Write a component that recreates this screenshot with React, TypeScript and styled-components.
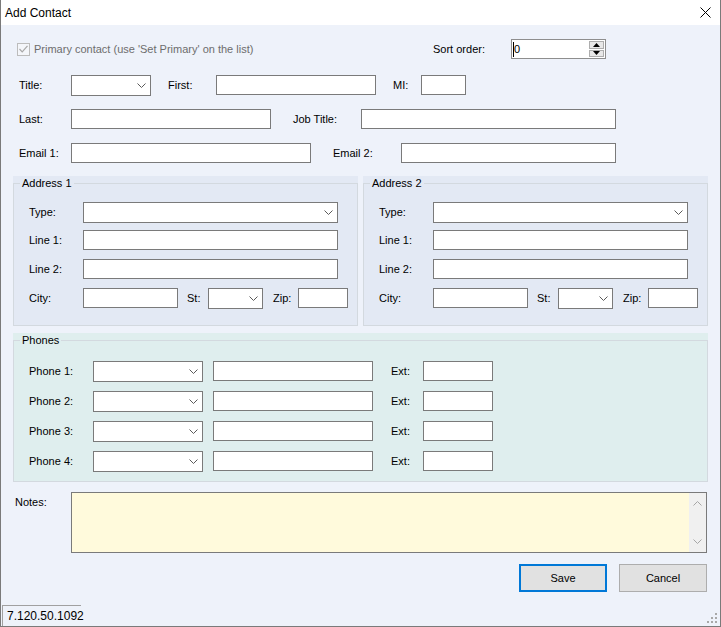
import React from 'react';
import styled, { createGlobalStyle } from 'styled-components';

const Global = createGlobalStyle`
  * { box-sizing: border-box; }
  html, body { margin: 0; padding: 0; background: #ffffff; }
  body {
    font-family: "Liberation Sans", Arial, sans-serif;
    font-size: 11px;
    color: #000;
  }
`;

const Window = styled.div`
  width: 721px;
  height: 627px;
  display: flex;
  flex-direction: column;
  border: 1px solid #7a7a7a;
  border-top: none;
  background: #eef2fa;
  overflow: hidden;
`;

const TitleBar = styled.div`
  height: 25px;
  flex-shrink: 0;
  background: #ffffff;
  display: flex;
  align-items: center;
  justify-content: space-between;
  padding: 0 9px 0 4px;
  font-size: 12px;
`;

const CloseButton = styled.button`
  width: 12px;
  height: 12px;
  padding: 0;
  margin: 0;
  border: none;
  background: transparent;
  display: flex;
  align-items: center;
  justify-content: center;
`;

const Body = styled.div`
  flex: 1;
  display: flex;
  flex-direction: column;
  padding: 0 12px 0 12px;
`;

const TopRow = styled.div`
  display: flex;
  align-items: center;
  height: 20px;
  margin-top: 14px;
  padding-left: 4px;
`;

const CheckGroup = styled.label`
  width: 416px;
  display: flex;
  align-items: center;
  gap: 4px;
  color: #6d6d6d;
`;

const CheckBox = styled.span`
  width: 13px;
  height: 13px;
  border: 1px solid #bcbcbc;
  background: #f4f6fa;
  display: flex;
  align-items: center;
  justify-content: center;
`;

const FormRow = styled.div<{ $mt: number; $pl: number }>`
  display: flex;
  align-items: flex-start;
  height: 20px;
  margin-top: ${p => p.$mt}px;
  padding-left: ${p => p.$pl}px;
`;

const Label = styled.span<{ $w: number; $ml?: number }>`
  width: ${p => p.$w}px;
  margin-left: ${p => p.$ml ?? 0}px;
  flex-shrink: 0;
  line-height: 20px;
  white-space: nowrap;
`;

const TextBox = styled.input<{ $w: number; $ml?: number }>`
  width: ${p => p.$w}px;
  height: 20px;
  margin: 0 0 0 ${p => p.$ml ?? 0}px;
  flex-shrink: 0;
  border: 1px solid #7a7a7a;
  background: #ffffff;
  padding: 0 2px;
  font: inherit;
  outline: none;
`;

const ComboBox = styled.div<{ $w: number; $ml?: number }>`
  width: ${p => p.$w}px;
  height: 21px;
  margin-left: ${p => p.$ml ?? 0}px;
  flex-shrink: 0;
  border: 1px solid #7a7a7a;
  background: #ffffff;
  display: flex;
  align-items: center;
  justify-content: flex-end;
  padding-right: 4px;
`;

const Spinner = styled.div`
  width: 95px;
  height: 20px;
  border: 1px solid #8e8e8e;
  background: #ffffff;
  display: flex;
  align-items: stretch;
`;

const SpinText = styled.div`
  flex: 1;
  display: flex;
  align-items: center;
  padding-left: 1px;
`;

const Caret = styled.span`
  display: inline-block;
  width: 1px;
  height: 15px;
  background: #000;
`;

const SpinButtons = styled.div`
  width: 15px;
  margin: 1px 1px 1px 0;
  display: flex;
  flex-direction: column;
  gap: 1px;
`;

const SpinButton = styled.div`
  flex: 1;
  border: 1px solid #adadad;
  background: #e8e8e8;
  display: flex;
  align-items: center;
  justify-content: center;
`;

const GroupsRow = styled.div`
  display: flex;
  gap: 5px;
  margin-top: 13px;
`;

const GroupPanel = styled.div<{ $bg: string; $h: number; $mt?: number; $fill?: boolean }>`
  flex: ${p => (p.$fill ? '1 1 0' : 'none')};
  height: ${p => p.$h}px;
  margin-top: ${p => p.$mt ?? 0}px;
  background: ${p => p.$bg};
  display: flex;
`;

const Frame = styled.fieldset<{ $pt: number }>`
  flex: 1;
  margin: 0;
  min-width: 0;
  border: 1px solid #d3d9df;
  padding: ${p => p.$pt}px 0 0 6px;
`;

const Legend = styled.legend`
  padding: 0 2px;
  line-height: 14px;
  font-size: 11px;
`;

const NotesRow = styled.div`
  display: flex;
  margin-top: 10px;
  padding: 0 1px 0 2px;
`;

const NotesBox = styled.div`
  flex: 1;
  height: 61px;
  border: 1px solid #7a7a7a;
  background: #fffadc;
  display: flex;
`;

const NotesArea = styled.textarea`
  flex: 1;
  border: none;
  background: transparent;
  resize: none;
  outline: none;
  font: inherit;
  padding: 2px;
  overflow: hidden;
`;

const ScrollTrack = styled.div`
  width: 17px;
  background: #f0f0f0;
  display: flex;
  flex-direction: column;
  justify-content: space-between;
  align-items: center;
  padding: 8px 0 8px;
`;

const ButtonRow = styled.div`
  display: flex;
  justify-content: flex-end;
  gap: 12px;
  margin-top: 11px;
  padding-right: 1px;
`;

const DialogButton = styled.button<{ $primary?: boolean }>`
  width: 88px;
  height: 28px;
  margin: 0;
  font: inherit;
  font-size: 11px;
  color: #000;
  background: #e1e1e1;
  border: ${p => (p.$primary ? '2px solid #0078d7' : '1px solid #adadad')};
  padding: 0;
`;

const StatusBar = styled.div`
  height: 23px;
  flex-shrink: 0;
  display: flex;
  align-items: flex-end;
  padding: 1px 2px 2px 1px;
`;

const StatusCell = styled.div`
  width: 79px;
  height: 21px;
  border-top: 1px solid #a0a0a0;
  border-left: 1px solid #a0a0a0;
  padding-left: 4px;
  line-height: 20px;
  font-size: 12px;
  margin-bottom: -2px;
`;

const Grip = styled.svg`
  margin-left: auto;
`;

const Chevron = ({ color = '#5a5a5a' }: { color?: string }) => (
  <svg width="9" height="5" viewBox="0 0 9 5">
    <polyline points="0.5,0.5 4.5,4.5 8.5,0.5" fill="none" stroke={color} strokeWidth="1" />
  </svg>
);

const Combo = ({ w, ml }: { w: number; ml?: number }) => (
  <ComboBox $w={w} $ml={ml}>
    <Chevron />
  </ComboBox>
);

function AddressGroup({ title }: { title: string }) {
  return (
    <GroupPanel $bg="#e3e9f4" $h={150} $fill>
      <Frame $pt={12}>
        <Legend>{title}</Legend>
        <FormRow $mt={0} $pl={9}>
          <Label $w={54}>Type:</Label>
          <Combo w={255} />
        </FormRow>
        <FormRow $mt={8} $pl={9}>
          <Label $w={54}>Line 1:</Label>
          <TextBox $w={255} />
        </FormRow>
        <FormRow $mt={9} $pl={9}>
          <Label $w={54}>Line 2:</Label>
          <TextBox $w={255} />
        </FormRow>
        <FormRow $mt={9} $pl={9}>
          <Label $w={54}>City:</Label>
          <TextBox $w={95} />
          <Label $w={21} $ml={9}>St:</Label>
          <Combo w={55} />
          <Label $w={25} $ml={10}>Zip:</Label>
          <TextBox $w={50} />
        </FormRow>
      </Frame>
    </GroupPanel>
  );
}

export default function App() {
  return (
    <>
      <Global />
      <Window>
        <TitleBar>
          <span>Add Contact</span>
          <CloseButton aria-label="Close">
            <svg width="11" height="11" viewBox="0 0 11 11">
              <path d="M0.5 0.5 L10.5 10.5 M10.5 0.5 L0.5 10.5" stroke="#000" strokeWidth="1" fill="none" />
            </svg>
          </CloseButton>
        </TitleBar>
        <Body>
          <TopRow>
            <CheckGroup>
              <CheckBox>
                <svg width="9" height="8" viewBox="0 0 9 8">
                  <polyline points="0.5,4 3.2,6.8 8.5,0.8" fill="none" stroke="#a8a8a8" strokeWidth="1.2" />
                </svg>
              </CheckBox>
              <span>Primary contact (use 'Set Primary' on the list)</span>
            </CheckGroup>
            <Label $w={78}>Sort order:</Label>
            <Spinner>
              <SpinText>
                <Caret />
                <span>0</span>
              </SpinText>
              <SpinButtons>
                <SpinButton>
                  <svg width="7" height="4" viewBox="0 0 7 4"><polygon points="3.5,0 7,4 0,4" fill="#000" /></svg>
                </SpinButton>
                <SpinButton>
                  <svg width="7" height="4" viewBox="0 0 7 4"><polygon points="0,0 7,0 3.5,4" fill="#000" /></svg>
                </SpinButton>
              </SpinButtons>
            </Spinner>
          </TopRow>

          <FormRow $mt={16} $pl={6}>
            <Label $w={52}>Title:</Label>
            <Combo w={80} />
            <Label $w={48} $ml={17}>First:</Label>
            <TextBox $w={160} />
            <Label $w={28} $ml={17}>MI:</Label>
            <TextBox $w={45} />
          </FormRow>
          <FormRow $mt={14} $pl={6}>
            <Label $w={52}>Last:</Label>
            <TextBox $w={200} />
            <Label $w={68} $ml={22}>Job Title:</Label>
            <TextBox $w={255} />
          </FormRow>
          <FormRow $mt={14} $pl={6}>
            <Label $w={52}>Email 1:</Label>
            <TextBox $w={240} />
            <Label $w={68} $ml={22}>Email 2:</Label>
            <TextBox $w={215} />
          </FormRow>

          <GroupsRow>
            <AddressGroup title="Address 1" />
            <AddressGroup title="Address 2" />
          </GroupsRow>

          <GroupPanel $bg="#dfeeee" $h={149} $mt={7}>
            <Frame $pt={14}>
              <Legend>Phones</Legend>
              {[1, 2, 3, 4].map(n => (
                <FormRow key={n} $mt={n === 1 ? 0 : 10} $pl={9}>
                  <Label $w={64}>Phone {n}:</Label>
                  <Combo w={110} />
                  <TextBox $w={160} $ml={10} />
                  <Label $w={32} $ml={18}>Ext:</Label>
                  <TextBox $w={70} />
                </FormRow>
              ))}
            </Frame>
          </GroupPanel>

          <NotesRow>
            <Label $w={56}>Notes:</Label>
            <NotesBox>
              <NotesArea />
              <ScrollTrack>
                <svg width="9" height="5" viewBox="0 0 9 5">
                  <polyline points="0.5,4.5 4.5,0.5 8.5,4.5" fill="none" stroke="#a6a6a6" strokeWidth="1" />
                </svg>
                <Chevron color="#a6a6a6" />
              </ScrollTrack>
            </NotesBox>
          </NotesRow>

          <ButtonRow>
            <DialogButton $primary>Save</DialogButton>
            <DialogButton>Cancel</DialogButton>
          </ButtonRow>
        </Body>
        <StatusBar>
          <StatusCell>7.120.50.1092</StatusCell>
          <Grip width="11" height="11" viewBox="0 0 11 11">
            <rect x="8" y="0" width="2" height="2" fill="#a8a8a8" />
            <rect x="4" y="4" width="2" height="2" fill="#a8a8a8" />
            <rect x="8" y="4" width="2" height="2" fill="#a8a8a8" />
            <rect x="0" y="8" width="2" height="2" fill="#a8a8a8" />
            <rect x="4" y="8" width="2" height="2" fill="#a8a8a8" />
            <rect x="8" y="8" width="2" height="2" fill="#a8a8a8" />
          </Grip>
        </StatusBar>
      </Window>
    </>
  );
}
